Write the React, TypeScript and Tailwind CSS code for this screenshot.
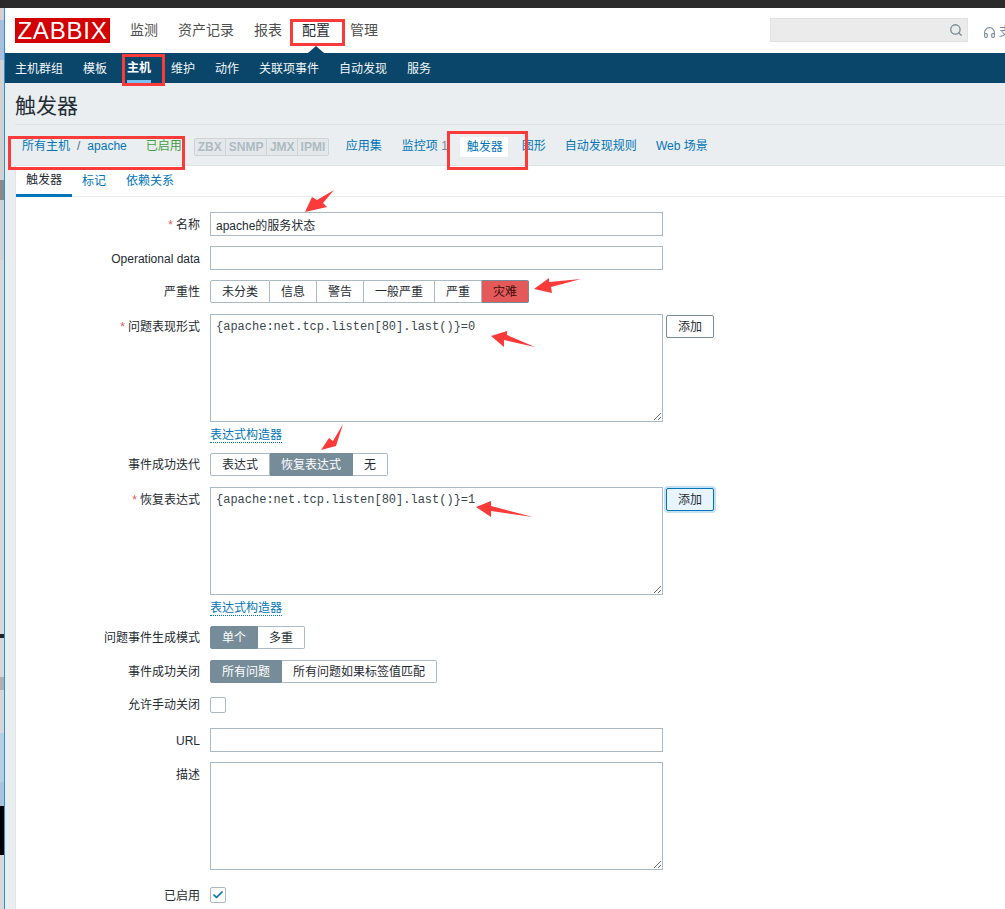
import React from "react";
import { Search, Headphones, Check } from "lucide-react";

const FONT = "font-['Liberation_Sans','Noto_Sans_CJK_SC',sans-serif]";

function Row({ label, req, seg, children, className = "" }: { label: string; req?: boolean; seg?: boolean; children: React.ReactNode; className?: string }) {
  return (
    <div className={`flex gap-[10px] ${className}`}>
      <div className={`w-[184px] shrink-0 text-right leading-[14px] ${seg ? "pt-[5px]" : "pt-[6px]"}`}>
        {req && <span className="text-[#e45959] mr-[3px]">*</span>}
        {label}
      </div>
      <div className="min-w-0">{children}</div>
    </div>
  );
}

function Seg({ items, active, activeClass = "bg-[#768d99] text-white border-[#768d99]" }: { items: string[]; active: number; activeClass?: string }) {
  return (
    <div className="flex h-[23px] w-fit">
      {items.map((t, i) => (
        <div
          key={t}
          className={`h-[23px] flex items-center px-[11px] border-y border-r leading-none ${i === 0 ? "border-l rounded-l-[2px]" : ""} ${i === items.length - 1 ? "rounded-r-[2px]" : ""} ${i === active ? activeClass : "bg-white border-[#acbbc3] text-[#1f2c33]"}`}
        >
          {t}
        </div>
      ))}
    </div>
  );
}

function TextBox({ value = "" }: { value?: string }) {
  return (
    <input
      readOnly
      value={value}
      className="block w-[453px] h-[24px] border border-[#acbbc3] bg-white px-[5px] text-[12px] text-[#1f2c33] outline-none"
    />
  );
}

function Area({ value = "", mono = true }: { value?: string; mono?: boolean }) {
  return (
    <textarea
      readOnly
      value={value}
      className={`block w-[453px] h-[108px] border border-[#acbbc3] bg-white px-[5px] py-[5px] text-[12px] leading-[14px] text-[#3a474e] outline-none ${mono ? "font-['Liberation_Mono',monospace]" : ""}`}
    />
  );
}

function Expr({ value, focused }: { value: string; focused?: boolean }) {
  return (
    <div>
      <div className="flex gap-[3px] items-start">
        <Area value={value} />
        <button
          className={`mt-[1px] w-[48px] h-[23px] rounded-[2px] border leading-none text-[#1f2c33] ${focused ? "bg-[#e8f5ff] border-[#0275b8] shadow-[0_0_0_2px_#c3e1f7]" : "bg-white border-[#768d99]"}`}
        >
          添加
        </button>
      </div>
      <div className="mt-[6px] h-[15px] leading-[14px] w-fit border-b border-dotted border-[#0275b8] text-[#0275b8]">表达式构造器</div>
    </div>
  );
}

const Box = ({ className }: { className: string }) => <div className={`absolute border-[3px] border-[#fb3a3a] ${className}`} />;

const strip = [
  ["h-[8px]", "bg-[#2a2a2a]"],
  ["h-[12px]", "bg-[#d8d0d0]"],
  ["h-[40px]", "bg-[#a9bfdd]"],
  ["h-[120px]", "bg-[#d2d2d2]"],
  ["h-[20px]", "bg-[#8a8a8a]"],
  ["h-[60px]", "bg-[#cfd3d6]"],
  ["h-[374px]", "bg-[#d8d8d8]"],
  ["h-[4px]", "bg-[#222222]"],
  ["h-[39px]", "bg-[#d8d8d8]"],
  ["h-[13px]", "bg-[#b0b0b0]"],
  ["h-[43px]", "bg-[#d6d6d6]"],
  ["h-[49px]", "bg-[#b8cde6]"],
  ["h-[24px]", "bg-[#a9c3de]"],
  ["h-[49px]", "bg-[#000000]"],
  ["h-[54px]", "bg-[#d8d8d8]"],
];

export default function App() {
  return (
    <div className={`relative w-[1005px] h-[909px] overflow-hidden bg-white text-[12px] text-[#1f2c33] ${FONT}`}>
      <div className="h-[8px] bg-[#2b2b2b]" />
      <div className="flex h-[901px]">
        <div className="w-[4px] shrink-0 -mt-[8px]">
          {strip.map(([h, c], i) => (
            <div key={i} className={`${h} ${c}`} />
          ))}
        </div>
        <div className="w-[1px] shrink-0 bg-[#2a8fe6]" />
        <div className="flex-1 min-w-0 bg-[#ebeef0] flex flex-col">
          {/* header */}
          <header className="h-[45px] bg-white flex items-center relative shrink-0">
            <div className="ml-[10px] w-[95px] h-[25px] bg-[#d40000] text-white flex items-center justify-center text-[24px] leading-none tracking-[0.8px] font-['Liberation_Sans',sans-serif]">
              ZABBIX
            </div>
            <nav className="flex gap-[20px] ml-[20px] text-[14px] text-[#4f4f4f]">
              <span>监测</span>
              <span>资产记录</span>
              <span>报表</span>
              <span className="text-[#1f2c33]">配置</span>
              <span>管理</span>
            </nav>
            <div className="absolute left-[765px] top-[10px] w-[198px] h-[24px] bg-[#ebebeb] border border-[#e2e2e2] flex items-center justify-end pr-[4px]">
              <Search size={14} strokeWidth={2.2} className="text-[#768d99]" />
            </div>
            <div className="absolute left-[978px] top-[15px] flex items-center gap-[3px] text-[#768d99] whitespace-nowrap">
              <Headphones size={13} />
              <span>支持</span>
            </div>
            <div className="absolute left-[303px] bottom-0 w-0 h-0 border-x-[8px] border-x-transparent border-b-[7px] border-b-[#0a466a]" />
          </header>
          {/* sub nav */}
          <nav className="h-[30px] bg-[#0a466a] flex gap-[20px] pl-[10px] text-[#f2f6f8] shrink-0">
            {["主机群组", "模板", "主机", "维护", "动作", "关联项事件", "自动发现", "服务"].map((t) => (
              <div key={t} className={`h-[30px] flex items-center pt-[1px] ${t === "主机" ? "text-white font-bold border-b-[3px] border-[#7cc0ef] pt-[3px]" : ""}`}>
                {t}
              </div>
            ))}
          </nav>
          {/* title */}
          <div className="h-[42px] ml-[10px] border-b border-[#dfe4e7] flex items-center shrink-0">
            <h1 className="text-[21px] leading-none text-[#1f2c33] pt-[3px]">触发器</h1>
          </div>
          {/* host nav */}
          <div className="h-[41px] ml-[10px] pt-[2px] flex items-center text-[#0275b8] border-b border-[#dfe4e7] shrink-0">
            <span className="ml-[7px]">所有主机</span>
            <span className="mx-[7px] text-[#4f6b7a]">/</span>
            <span className="mr-[19px]">apache</span>
            <span className="text-[#429e47]">已启用</span>
            <div className="ml-[12px] mt-[2px] h-[18px] flex items-center text-[#acbbc3] font-bold bg-[#e5e8ea] border border-[#cdd3d6] rounded-[2px] text-[12px] leading-none">
              <span className="px-[3px] h-full flex items-center border-r border-[#cdd3d6]">ZBX</span>
              <span className="px-[3px] h-full flex items-center border-r border-[#cdd3d6]">SNMP</span>
              <span className="px-[2.5px] h-full flex items-center border-r border-[#cdd3d6]">JMX</span>
              <span className="px-[2.5px] h-full flex items-center">IPMI</span>
            </div>
            <span className="ml-[17px]">应用集</span>
            <span className="ml-[20px] text-[#0275b8]">监控项 <span className="text-[#768d99]">1</span></span>
            <span className="ml-[12px] mt-[1px] h-[20px] pl-[7px] pr-[5px] bg-white rounded-[2px] flex items-center">触发器</span>
            <span className="ml-[14px]">图形</span>
            <span className="ml-[19px]">自动发现规则</span>
            <span className="ml-[19px]">Web 场景</span>
          </div>
          {/* form */}
          <div className="ml-[10px] flex-1 bg-white border-l border-[#dfe4e7]">
            <div className="h-[31px] border-b border-[#ebeef0] flex">
              <div className="w-[56px] h-[31px] border-b-[3px] border-[#0275b8] flex items-center justify-center">触发器</div>
              <div className="ml-[10px] h-[30px] flex items-center text-[#0275b8] pb-[1px]">标记</div>
              <div className="ml-[20px] h-[30px] flex items-center text-[#0275b8] pb-[1px]">依赖关系</div>
            </div>
            <div className="pt-[15px] flex flex-col gap-[10px]">
              <Row label="名称" req><TextBox value="apache的服务状态" /></Row>
              <Row label="Operational data"><TextBox /></Row>
              <Row label="严重性" seg>
                <Seg items={["未分类", "信息", "警告", "一般严重", "严重", "灾难"]} active={5} activeClass="bg-[#e45959] text-[#3b0d0d] border-[#768d99]" />
              </Row>
              <Row label="问题表现形式" req className="mt-[1px]">
                <Expr value="{apache:net.tcp.listen[80].last()}=0" />
              </Row>
              <Row label="事件成功迭代" seg><Seg items={["表达式", "恢复表达式", "无"]} active={1} /></Row>
              <Row label="恢复表达式" req className="mt-[1px]">
                <Expr value="{apache:net.tcp.listen[80].last()}=1" focused />
              </Row>
              <Row label="问题事件生成模式" seg><Seg items={["单个", "多重"]} active={0} /></Row>
              <Row label="事件成功关闭" seg className="mt-[1px]"><Seg items={["所有问题", "所有问题如果标签值匹配"]} active={0} /></Row>
              <Row label="允许手动关闭" seg>
                <div className="h-[25px] pt-[4px]">
                  <div className="w-[16px] h-[16px] border border-[#acbbc3] rounded-[2px] bg-white" />
                </div>
              </Row>
              <Row label="URL"><TextBox /></Row>
              <Row label="描述"><Area mono={false} /></Row>
              <Row label="已启用" seg className="mt-[4px]">
                <div className="h-[24px] pt-[3px]">
                  <div className="w-[16px] h-[16px] border border-[#acbbc3] rounded-[2px] bg-white flex items-center justify-center">
                    <Check size={12} strokeWidth={3.5} className="text-[#0275b8]" />
                  </div>
                </div>
              </Row>
            </div>
          </div>
        </div>
      </div>

      {/* annotations */}
      <Box className="left-[290px] top-[19px] w-[55px] h-[27px]" />
      <Box className="left-[122px] top-[54px] w-[43px] h-[32px]" />
      <Box className="left-[8px] top-[136px] w-[177px] h-[34px]" />
      <Box className="left-[447px] top-[131px] w-[81px] h-[39px]" />
      <svg className="absolute left-0 top-0 pointer-events-none" width="1005" height="909" viewBox="0 0 1005 909">
        <g fill="#fb3a3a">
          <polygon points="305,212 312,197 317,200 334,190 323,203 327,207" />
          <polygon points="534,289 549,278 549,282 581,279 551,287 552,293" />
          <polygon points="491,336 507,331 507,335 535,347 504,340 504,347" />
          <polygon points="321,450 329,438 333,441 343,424 336,446" />
          <polygon points="476,507 491,501 491,506 533,517 491,511 491,517" />
        </g>
      </svg>
    </div>
  );
}
